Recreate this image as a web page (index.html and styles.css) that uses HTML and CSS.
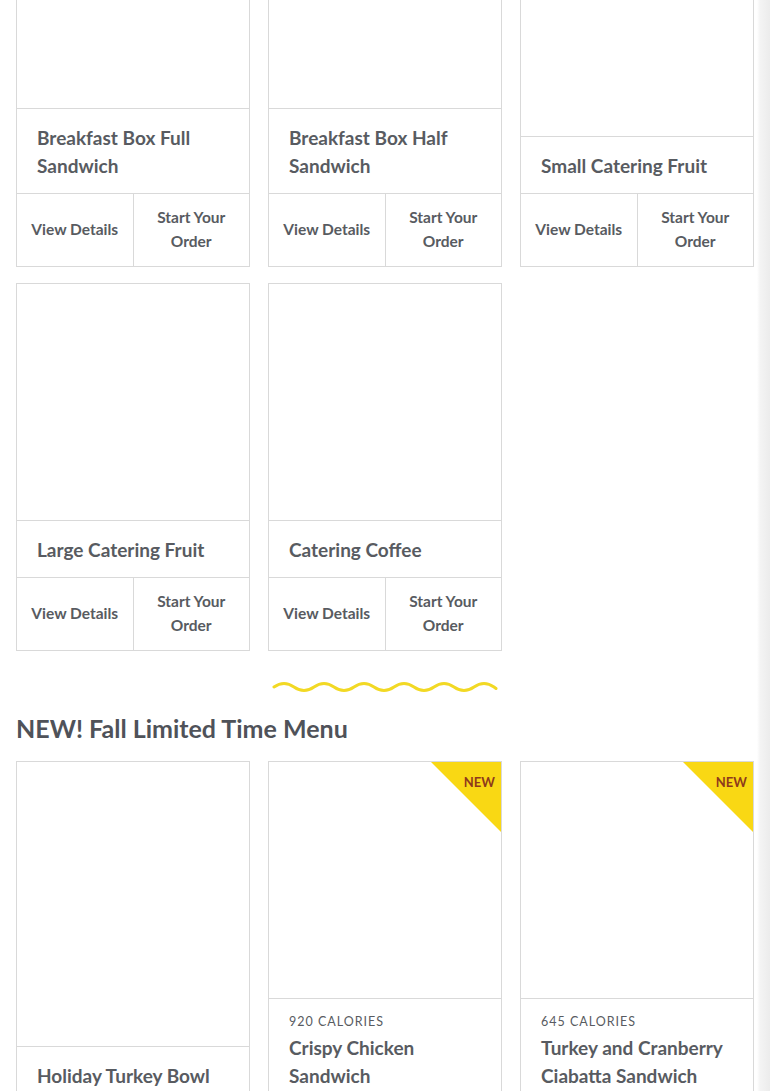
FILE: index.html
```html
<!DOCTYPE html>
<html lang="en">
<head>
    <meta charset="UTF-8">
    <meta name="viewport" content="width=device-width, initial-scale=1.0">
    <title>Catering Menu</title>
    <link rel="stylesheet" href="styles.css">
</head>
<body>
    <main class="menu">
        <div class="card-grid card-grid-first">
            <div class="card">
                <div class="card-img"></div>
                <div class="card-body">
                    <h3 class="card-title">Breakfast Box Full Sandwich</h3>
                </div>
                <div class="card-actions">
                    <a href="#" class="card-btn">View Details</a>
                    <a href="#" class="card-btn">Start Your Order</a>
                </div>
            </div>
            <div class="card">
                <div class="card-img"></div>
                <div class="card-body">
                    <h3 class="card-title">Breakfast Box Half Sandwich</h3>
                </div>
                <div class="card-actions">
                    <a href="#" class="card-btn">View Details</a>
                    <a href="#" class="card-btn">Start Your Order</a>
                </div>
            </div>
            <div class="card">
                <div class="card-img"></div>
                <div class="card-body">
                    <h3 class="card-title">Small Catering Fruit</h3>
                </div>
                <div class="card-actions">
                    <a href="#" class="card-btn">View Details</a>
                    <a href="#" class="card-btn">Start Your Order</a>
                </div>
            </div>
            <div class="card">
                <div class="card-img"></div>
                <div class="card-body">
                    <h3 class="card-title">Large Catering Fruit</h3>
                </div>
                <div class="card-actions">
                    <a href="#" class="card-btn">View Details</a>
                    <a href="#" class="card-btn">Start Your Order</a>
                </div>
            </div>
            <div class="card">
                <div class="card-img"></div>
                <div class="card-body">
                    <h3 class="card-title">Catering Coffee</h3>
                </div>
                <div class="card-actions">
                    <a href="#" class="card-btn">View Details</a>
                    <a href="#" class="card-btn">Start Your Order</a>
                </div>
            </div>
        </div>

        <div class="squiggle">
            <svg width="226" height="14" viewBox="0 0 226 14">
                <path d="M2 7 q10 -7 20 0 t20 0 t20 0 t20 0 t20 0 t20 0 t20 0 t20 0 t20 0 t20 0 t20 0 q2 1.5 2 1.5" fill="none" stroke="#f2d924" stroke-width="3" stroke-linecap="round"/>
            </svg>
        </div>

        <h2 class="section-title">NEW! Fall Limited Time Menu</h2>

        <div class="card-grid">
            <div class="card">
                <div class="card-img"></div>
                <div class="card-body">
                    <h3 class="card-title">Holiday Turkey Bowl</h3>
                </div>
            </div>
            <div class="card">
                <span class="badge-new">NEW</span>
                <div class="card-img"></div>
                <div class="card-body">
                    <div class="calories">920 Calories</div>
                    <h3 class="card-title">Crispy Chicken Sandwich</h3>
                </div>
            </div>
            <div class="card">
                <span class="badge-new">NEW</span>
                <div class="card-img"></div>
                <div class="card-body">
                    <div class="calories">645 Calories</div>
                    <h3 class="card-title">Turkey and Cranberry Ciabatta Sandwich</h3>
                </div>
            </div>
        </div>
    </main>
</body>
</html>
```

FILE: styles.css
```css
html {
    background: linear-gradient(to right, #ffffff 0, #ffffff 757px, #f4f4f4 760px, #ececec 770px);
}
body {
    margin: 0;
    font-family: 'Lato', 'Open Sans', sans-serif;
    color: #585b61;
    height: 1091px;
    overflow: hidden;
}
.menu {
    padding: 0 16px;
    width: 738px;
}
.card-grid {
    display: grid;
    grid-template-columns: repeat(3, 234px);
    column-gap: 18px;
    row-gap: 16px;
}
.card-grid-first {
    margin-top: -129px;
}
.card {
    position: relative;
    display: flex;
    flex-direction: column;
    border: 1px solid #d9d9d9;
    background: #fff;
    overflow: hidden;
}
.card-img {
    flex: 1;
    min-height: 236px;
    border-bottom: 1px solid #d9d9d9;
}
.card-body {
    padding: 15px 20px 13px;
}
.card-title {
    margin: 0;
    font-size: 19px;
    line-height: 28px;
    font-weight: 700;
    color: #585b61;
}
.calories {
    font-size: 12.5px;
    line-height: 16px;
    letter-spacing: 1px;
    text-transform: uppercase;
    margin-bottom: 4px;
    color: #585b61;
}
.card-actions {
    display: flex;
    border-top: 1px solid #d9d9d9;
}
.card-btn {
    flex: 1;
    display: flex;
    align-items: center;
    justify-content: center;
    padding: 11px 10px 13px;
    min-height: 48px;
    text-align: center;
    font-size: 15.5px;
    line-height: 24px;
    font-weight: 700;
    color: #585b61;
    text-decoration: none;
}
.card-btn + .card-btn {
    border-left: 1px solid #d9d9d9;
}
.squiggle {
    display: flex;
    justify-content: center;
    margin-top: 29px;
}
.squiggle svg {
    display: block;
}
.section-title {
    margin: 19px 0 16px;
    font-size: 25px;
    line-height: 30px;
    font-weight: 700;
    color: #4f5259;
}
.section-title + .card-grid {
    margin-top: 18px;
}
.badge-new {
    position: absolute;
    top: 0;
    right: 0;
    width: 70px;
    height: 70px;
    box-sizing: border-box;
    padding: 12px 6px 0 0;
    text-align: right;
    background: linear-gradient(to bottom left, #f9d814 49.3%, transparent 50.7%);
    color: #8e3a1c;
    font-size: 13px;
    line-height: 16px;
    font-weight: 700;
}
```
